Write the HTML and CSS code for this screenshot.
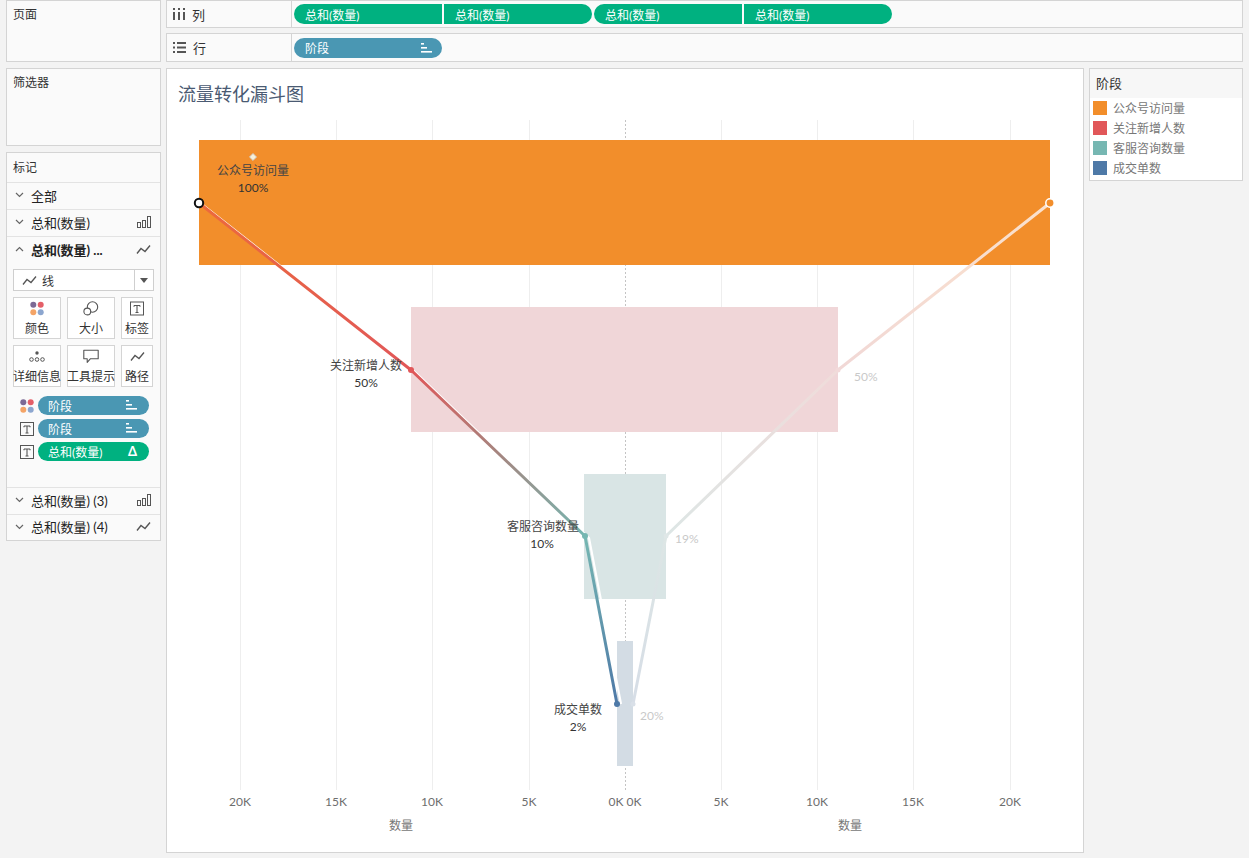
FILE: index.html
```html
<!DOCTYPE html>
<html lang="zh">
<head>
<meta charset="utf-8">
<title>流量转化漏斗图</title>
<link rel="stylesheet" href="styles.css">
</head>
<body>
<div class="app">
  <div class="top">
    <div class="panel pages"><div class="panel-title">页面</div></div>
    <div class="shelves">
      <div class="shelf cols">
        <div class="shelf-label">
          <svg class="shelf-icon" width="12" height="12" viewBox="0 0 12 12"><rect x="0" y="0" width="2" height="2" fill="#555"/><rect x="5" y="0" width="2" height="2" fill="#555"/><rect x="10" y="0" width="2" height="2" fill="#555"/><rect x="0" y="4" width="2" height="8" fill="#555"/><rect x="5" y="4" width="2" height="8" fill="#555"/><rect x="10" y="4" width="2" height="8" fill="#555"/></svg>
          <span>列</span>
        </div>
        <div class="shelf-pills">
          <span class="pill green l">总和(数量)</span>
          <span class="pill green r">总和(数量)</span>
          <span class="pill green l">总和(数量)</span>
          <span class="pill green r">总和(数量)</span>
        </div>
      </div>
      <div class="shelf rows">
        <div class="shelf-label">
          <svg class="shelf-icon" width="13" height="11" viewBox="0 0 13 11"><rect x="0" y="0" width="2" height="2" fill="#555"/><rect x="4" y="0" width="9" height="2" fill="#555"/><rect x="0" y="4.5" width="2" height="2" fill="#555"/><rect x="4" y="4.5" width="9" height="2" fill="#555"/><rect x="0" y="9" width="2" height="2" fill="#555"/><rect x="4" y="9" width="9" height="2" fill="#555"/></svg>
          <span>行</span>
        </div>
        <div class="shelf-pills">
          <span class="pill blue">阶段<svg class="sort" width="11" height="10" viewBox="0 0 11 10"><rect x="0" y="0" width="3" height="1.6" fill="#fff"/><rect x="0" y="4" width="6" height="1.6" fill="#fff"/><rect x="0" y="8" width="11" height="1.6" fill="#fff"/></svg></span>
        </div>
      </div>
    </div>
  </div>

  <div class="main">
    <div class="side">
      <div class="panel filters"><div class="panel-title">筛选器</div></div>
      <div class="panel marks">
        <div class="marks-title">标记</div>
        <div class="mrow">
          <svg class="chev" width="9" height="6" viewBox="0 0 9 6"><polyline points="1,1 4.5,4.5 8,1" fill="none" stroke="#666" stroke-width="1.2"/></svg>
          <span class="mrow-text">全部</span>
        </div>
        <div class="mrow">
          <svg class="chev" width="9" height="6" viewBox="0 0 9 6"><polyline points="1,1 4.5,4.5 8,1" fill="none" stroke="#666" stroke-width="1.2"/></svg>
          <span class="mrow-text">总和(数量)</span>
          <svg class="mrow-icon" width="14" height="12" viewBox="0 0 14 12"><rect x="0.5" y="6.5" width="3" height="5" fill="none" stroke="#555"/><rect x="5.5" y="4.5" width="3" height="7" fill="none" stroke="#555"/><rect x="10.5" y="0.5" width="3" height="11" fill="none" stroke="#555"/></svg>
        </div>
        <div class="mrow open">
          <svg class="chev" width="9" height="6" viewBox="0 0 9 6"><polyline points="1,5 4.5,1.5 8,5" fill="none" stroke="#666" stroke-width="1.2"/></svg>
          <span class="mrow-text bold">总和(数量) ...</span>
          <svg class="mrow-icon" width="15" height="11" viewBox="0 0 15 11"><polyline points="1,9.5 5,4.5 9,7.5 14,1.5" fill="none" stroke="#555" stroke-width="1.4"/></svg>
        </div>
        <div class="mcontent">
          <div class="dropdown">
            <svg width="15" height="11" viewBox="0 0 15 11"><polyline points="1,9.5 5,4.5 9,7.5 14,1.5" fill="none" stroke="#555" stroke-width="1.3"/></svg>
            <span class="dd-text">线</span>
            <span class="dd-arrow"><svg width="8" height="5" viewBox="0 0 8 5"><polygon points="0,0 8,0 4,5" fill="#555"/></svg></span>
          </div>
          <div class="mbtns">
            <div class="mbtn">
              <svg width="14" height="14" viewBox="0 0 14 14"><circle cx="3.3" cy="3.3" r="3" fill="#7d6a95"/><circle cx="10.7" cy="3.3" r="3" fill="#e45f68"/><circle cx="3.3" cy="10.7" r="3" fill="#f4a467"/><circle cx="10.7" cy="10.7" r="3" fill="#8ca6cf"/></svg>
              <span>颜色</span>
            </div>
            <div class="mbtn">
              <svg width="16" height="15" viewBox="0 0 16 15"><circle cx="9.5" cy="6" r="5.2" fill="#fff" stroke="#555" stroke-width="1.1"/><circle cx="4.3" cy="10.5" r="3.4" fill="#fff" stroke="#555" stroke-width="1.1"/></svg>
              <span>大小</span>
            </div>
            <div class="mbtn">
              <svg width="14" height="14" viewBox="0 0 14 14"><rect x="0.5" y="0.5" width="13" height="13" fill="none" stroke="#555"/><path d="M4 4H10M7 4V11M5.5 11H8.5M4 4V5.3M10 4V5.3" fill="none" stroke="#555" stroke-width="1.1"/></svg>
              <span>标签</span>
            </div>
            <div class="mbtn">
              <svg width="16" height="12" viewBox="0 0 16 12"><circle cx="8" cy="2.5" r="1.7" fill="#555"/><circle cx="2.5" cy="9" r="1.8" fill="none" stroke="#555"/><circle cx="8" cy="9" r="1.8" fill="none" stroke="#555"/><circle cx="13.5" cy="9" r="1.8" fill="none" stroke="#555"/></svg>
              <span>详细信息</span>
            </div>
            <div class="mbtn">
              <svg width="16" height="14" viewBox="0 0 16 14"><path d="M0.8 0.8H15.2V9.2H7.5L4.2 12.8V9.2H0.8Z" fill="none" stroke="#555" stroke-width="1.1" stroke-linejoin="round"/></svg>
              <span>工具提示</span>
            </div>
            <div class="mbtn">
              <svg width="15" height="11" viewBox="0 0 15 11"><polyline points="1,9.5 5,4.5 9,7.5 14,1.5" fill="none" stroke="#555" stroke-width="1.3"/></svg>
              <span>路径</span>
            </div>
          </div>
          <div class="mpills">
            <div class="mpill-row">
              <svg class="mp-icon" width="14" height="14" viewBox="0 0 14 14"><circle cx="3.3" cy="3.3" r="3" fill="#7d6a95"/><circle cx="10.7" cy="3.3" r="3" fill="#e45f68"/><circle cx="3.3" cy="10.7" r="3" fill="#f4a467"/><circle cx="10.7" cy="10.7" r="3" fill="#8ca6cf"/></svg>
              <span class="mpill blue">阶段<svg class="sort" width="11" height="10" viewBox="0 0 11 10"><rect x="0" y="0" width="3" height="1.6" fill="#fff"/><rect x="0" y="4" width="6" height="1.6" fill="#fff"/><rect x="0" y="8" width="11" height="1.6" fill="#fff"/></svg></span>
            </div>
            <div class="mpill-row">
              <svg class="mp-icon" width="14" height="14" viewBox="0 0 14 14"><rect x="0.5" y="0.5" width="13" height="13" fill="none" stroke="#555"/><path d="M4 4H10M7 4V11M5.5 11H8.5M4 4V5.3M10 4V5.3" fill="none" stroke="#555" stroke-width="1.1"/></svg>
              <span class="mpill blue">阶段<svg class="sort" width="11" height="10" viewBox="0 0 11 10"><rect x="0" y="0" width="3" height="1.6" fill="#fff"/><rect x="0" y="4" width="6" height="1.6" fill="#fff"/><rect x="0" y="8" width="11" height="1.6" fill="#fff"/></svg></span>
            </div>
            <div class="mpill-row">
              <svg class="mp-icon" width="14" height="14" viewBox="0 0 14 14"><rect x="0.5" y="0.5" width="13" height="13" fill="none" stroke="#555"/><path d="M4 4H10M7 4V11M5.5 11H8.5M4 4V5.3M10 4V5.3" fill="none" stroke="#555" stroke-width="1.1"/></svg>
              <span class="mpill green">总和(数量)<span class="delta">Δ</span></span>
            </div>
          </div>
        </div>
        <div class="mspacer"></div>
        <div class="mrow">
          <svg class="chev" width="9" height="6" viewBox="0 0 9 6"><polyline points="1,1 4.5,4.5 8,1" fill="none" stroke="#666" stroke-width="1.2"/></svg>
          <span class="mrow-text">总和(数量) (3)</span>
          <svg class="mrow-icon" width="14" height="12" viewBox="0 0 14 12"><rect x="0.5" y="6.5" width="3" height="5" fill="none" stroke="#555"/><rect x="5.5" y="4.5" width="3" height="7" fill="none" stroke="#555"/><rect x="10.5" y="0.5" width="3" height="11" fill="none" stroke="#555"/></svg>
        </div>
        <div class="mrow last">
          <svg class="chev" width="9" height="6" viewBox="0 0 9 6"><polyline points="1,1 4.5,4.5 8,1" fill="none" stroke="#666" stroke-width="1.2"/></svg>
          <span class="mrow-text">总和(数量) (4)</span>
          <svg class="mrow-icon" width="15" height="11" viewBox="0 0 15 11"><polyline points="1,9.5 5,4.5 9,7.5 14,1.5" fill="none" stroke="#555" stroke-width="1.4"/></svg>
        </div>
      </div>
    </div>

    <div class="chart">
      <div class="chart-title">流量转化漏斗图</div>
      <svg class="chart-svg" width="916" height="744" viewBox="167 107 916 744">
        <defs>
          <linearGradient id="g1" gradientUnits="userSpaceOnUse" x1="199" y1="203" x2="411" y2="370"><stop offset="0" stop-color="#ec6a3c"/><stop offset="1" stop-color="#e15759"/></linearGradient>
          <linearGradient id="g2" gradientUnits="userSpaceOnUse" x1="411" y1="370" x2="585" y2="536"><stop offset="0" stop-color="#e15759"/><stop offset="0.5" stop-color="#a5857f"/><stop offset="1" stop-color="#76b7b2"/></linearGradient>
          <linearGradient id="g3" gradientUnits="userSpaceOnUse" x1="585" y1="536" x2="617" y2="704"><stop offset="0" stop-color="#76b7b2"/><stop offset="1" stop-color="#4e79a7"/></linearGradient>
          <linearGradient id="h1" gradientUnits="userSpaceOnUse" x1="1050" y1="203" x2="838" y2="370"><stop offset="0" stop-color="#fbe1cc"/><stop offset="1" stop-color="#f1d8d6"/></linearGradient>
          <linearGradient id="h2" gradientUnits="userSpaceOnUse" x1="838" y1="370" x2="666" y2="536"><stop offset="0" stop-color="#f0dcda"/><stop offset="1" stop-color="#dde6e5"/></linearGradient>
          <linearGradient id="h3" gradientUnits="userSpaceOnUse" x1="666" y1="536" x2="633" y2="704"><stop offset="0" stop-color="#dde6e5"/><stop offset="1" stop-color="#d6dde6"/></linearGradient>
        </defs>
        <g stroke="#eeeeee" stroke-width="1">
          <line x1="240.5" y1="120" x2="240.5" y2="790"/>
          <line x1="336.5" y1="120" x2="336.5" y2="790"/>
          <line x1="432.5" y1="120" x2="432.5" y2="790"/>
          <line x1="529.5" y1="120" x2="529.5" y2="790"/>
          <line x1="721.5" y1="120" x2="721.5" y2="790"/>
          <line x1="817.5" y1="120" x2="817.5" y2="790"/>
          <line x1="913.5" y1="120" x2="913.5" y2="790"/>
          <line x1="1010.5" y1="120" x2="1010.5" y2="790"/>
        </g>
        <line x1="625.5" y1="120" x2="625.5" y2="790" stroke="#c4c4c4" stroke-dasharray="2 2"/>
        <rect x="199" y="140" width="851" height="125" fill="#f28e2b"/>
        <rect x="411" y="307" width="427" height="125" fill="#f0d6d8"/>
        <rect x="584" y="474" width="82" height="125" fill="#d9e5e5"/>
        <rect x="617" y="641" width="16" height="125" fill="#d3dce4"/>

        <g fill="none" stroke-width="3" stroke-linecap="round">
          <line x1="1050" y1="203" x2="838" y2="370" stroke="url(#h1)"/>
          <line x1="838" y1="370" x2="666" y2="536" stroke="url(#h2)"/>
          <line x1="666" y1="536" x2="633" y2="704" stroke="url(#h3)"/>
        </g>
        <polyline points="203,205 415,372 589,538 621,704" fill="none" stroke="#ffffff" stroke-width="2.2"/>
        <g fill="none" stroke-width="3" stroke-linecap="round">
          <line x1="199" y1="203" x2="411" y2="370" stroke="url(#g1)"/>
          <line x1="411" y1="370" x2="585" y2="536" stroke="url(#g2)"/>
          <line x1="585" y1="536" x2="617" y2="704" stroke="url(#g3)"/>
        </g>
        <circle cx="411" cy="370" r="3" fill="#e15759"/>
        <circle cx="585" cy="536" r="3" fill="#76b7b2"/>
        <circle cx="617" cy="704" r="3" fill="#4e79a7"/>
        <circle cx="838" cy="370" r="2.5" fill="#f2dada"/>
        <circle cx="666" cy="536" r="2.5" fill="#dfe7e7"/>
        <circle cx="633" cy="704" r="2.5" fill="#d9e0e8"/>
        <circle cx="199" cy="203" r="4.2" fill="#ffffff" stroke="#111" stroke-width="2"/>
        <circle cx="1050" cy="203" r="4.2" fill="#f28e2b" stroke="#ffffff" stroke-width="1.5"/>
        <rect x="250.5" y="154.5" width="5" height="5" transform="rotate(45 253 157)" fill="#f7f0d8" stroke="#c9c9c9" stroke-width="0.8"/>

        <g class="lbl-name" text-anchor="middle">
          <text x="253" y="175">公众号访问量</text>
          <text x="366" y="370">关注新增人数</text>
          <text x="543" y="531">客服咨询数量</text>
          <text x="578" y="714">成交单数</text>
        </g>
        <g class="lbl-pct" text-anchor="middle">
          <text x="253" y="192">100%</text>
          <text x="366" y="387">50%</text>
          <text x="542" y="548">10%</text>
          <text x="578" y="731">2%</text>
        </g>
        <g class="lbl-faint">
          <text x="854" y="381">50%</text>
          <text x="675" y="543">19%</text>
          <text x="640" y="720">20%</text>
        </g>
        <g class="tick" text-anchor="middle">
          <text x="240" y="806">20K</text>
          <text x="336" y="806">15K</text>
          <text x="432" y="806">10K</text>
          <text x="529" y="806">5K</text>
          <text x="616" y="806">0K</text>
          <text x="634" y="806">0K</text>
          <text x="721" y="806">5K</text>
          <text x="817" y="806">10K</text>
          <text x="913" y="806">15K</text>
          <text x="1010" y="806">20K</text>
        </g>
        <g class="axis-title" text-anchor="middle">
          <text x="401" y="830">数量</text>
          <text x="850" y="830">数量</text>
        </g>
      </svg>
    </div>

    <div class="legend">
      <div class="legend-title">阶段</div>
      <div class="legend-item"><span class="sw" style="background:#f28e2b"></span>公众号访问量</div>
      <div class="legend-item"><span class="sw" style="background:#e15759"></span>关注新增人数</div>
      <div class="legend-item"><span class="sw" style="background:#76b7b2"></span>客服咨询数量</div>
      <div class="legend-item"><span class="sw" style="background:#4e79a7"></span>成交单数</div>
    </div>
  </div>
</div>
</body>
</html>
```

FILE: styles.css
```css
* { box-sizing: border-box; }
html, body { margin: 0; padding: 0; }
body {
  background: #f3f3f3;
  font-family: Lato, "Noto Sans CJK SC", sans-serif;
  font-size: 12px;
  color: #333;
  width: 1249px;
  height: 858px;
  overflow: hidden;
}
.app {
  padding: 0 6px 0 6px;
  display: flex;
  flex-direction: column;
  gap: 6px;
}
.top { display: flex; gap: 5px; height: 62px; }
.panel { background: #fafafa; border: 1px solid #d4d4d4; }
.pages { width: 155px; height: 62px; }
.panel-title { padding: 6px 0 0 6px; font-size: 12px; line-height: 16px; color: #333; }
.shelves { flex: 1; display: flex; flex-direction: column; gap: 5px; }
.shelf { display: flex; background: #fafafa; border: 1px solid #d4d4d4; height: 28px; }
.shelf.rows { height: 29px; }
.shelf-label {
  width: 125px;
  border-right: 1px solid #d4d4d4;
  display: flex;
  align-items: center;
  padding-left: 6px;
  gap: 7px;
  font-size: 13px;
  color: #333;
}
.shelf-pills { display: flex; align-items: center; gap: 2px; padding-left: 2px; }
.pill {
  height: 20px;
  width: 148px;
  display: flex;
  align-items: center;
  justify-content: space-between;
  color: #fff;
  padding: 0 10px 0 11px;
  font-size: 12px;
  border-radius: 10px;
}
.green { background: #00b180; }
.blue { background: #4a97b3; }
.pill.l { border-radius: 10px 0 0 10px; }
.pill.r { border-radius: 0 10px 10px 0; }

.main { display: flex; gap: 5px; height: 785px; }
.side { width: 155px; display: flex; flex-direction: column; gap: 6px; }
.filters { height: 78px; }
.marks { height: 389px; display: flex; flex-direction: column; }
.marks-title { height: 29px; padding: 7px 0 0 6px; font-size: 12px; line-height: 16px; }
.mrow {
  height: 27px;
  border-top: 1px solid #e3e3e3;
  display: flex;
  align-items: center;
  padding: 0 9px 2px 8px;
  gap: 7px;
  font-size: 13px;
  color: #222;
  flex-shrink: 0;
}
.mrow.last { height: 26px; }
.mrow-text { flex: 1; white-space: nowrap; }
.mrow-text.bold { font-weight: 700; }
.mcontent { padding: 6px 6px 0 6px; }
.dropdown {
  height: 22px;
  border: 1px solid #cfcfcf;
  background: #fff;
  display: flex;
  align-items: center;
  padding-left: 8px;
  gap: 5px;
  font-size: 12px;
}
.dd-text { flex: 1; }
.dd-arrow {
  width: 19px;
  height: 100%;
  border-left: 1px solid #cfcfcf;
  display: flex;
  align-items: center;
  justify-content: center;
}
.mbtns {
  margin-top: 6px;
  display: grid;
  grid-template-columns: 48px 48px 32px;
  grid-auto-rows: 42px;
  gap: 6px;
}
.mbtn {
  border: 1px solid #d4d4d4;
  background: #fff;
  display: flex;
  flex-direction: column;
  align-items: center;
  justify-content: center;
  gap: 3px;
  font-size: 12px;
  color: #333;
  white-space: nowrap;
  overflow: visible;
}
.mbtn svg { height: 15px; }
.mpills { margin-top: 9px; display: flex; flex-direction: column; gap: 4px; }
.mpill-row { display: flex; align-items: center; gap: 4px; padding-left: 7px; height: 19px; }
.mp-icon { flex-shrink: 0; }
.mpill {
  width: 111px;
  height: 19px;
  border-radius: 10px;
  color: #fff;
  display: flex;
  align-items: center;
  justify-content: space-between;
  padding: 0 12px 1px 10px;
  font-size: 12px;
}
.delta { font-size: 13px; font-weight: 700; }
.mspacer { flex: 1; }

.chart { width: 918px; background: #fff; border: 1px solid #d4d4d4; }
.chart-title {
  padding: 13px 0 0 11px;
  height: 38px;
  line-height: 24px;
  font-size: 18px;
  color: #4a5a72;
}
.chart-svg { display: block; font-family: Lato, "Noto Sans CJK SC", sans-serif; }
.lbl-name text { font-size: 12px; fill: #444; }
.lbl-pct text { font-size: 12px; fill: #333; }
.lbl-faint text { font-size: 12px; fill: #c9c9c9; }
.tick text { font-size: 12px; fill: #6e6e6e; }
.axis-title text { font-size: 12px; fill: #777; }

.legend { width: 154px; height: 113px; background: #fff; border: 1px solid #d4d4d4; }
.legend-title {
  height: 29px;
  background: #f7f7f7;
  padding: 6px 0 0 6px;
  font-size: 13px;
  line-height: 16px;
  color: #333;
}
.legend-item {
  height: 20px;
  display: flex;
  align-items: center;
  gap: 6px;
  padding-left: 3px;
  padding-bottom: 1px;
  font-size: 12px;
  color: #777;
}
.sw { width: 14px; height: 14px; display: inline-block; }
```
